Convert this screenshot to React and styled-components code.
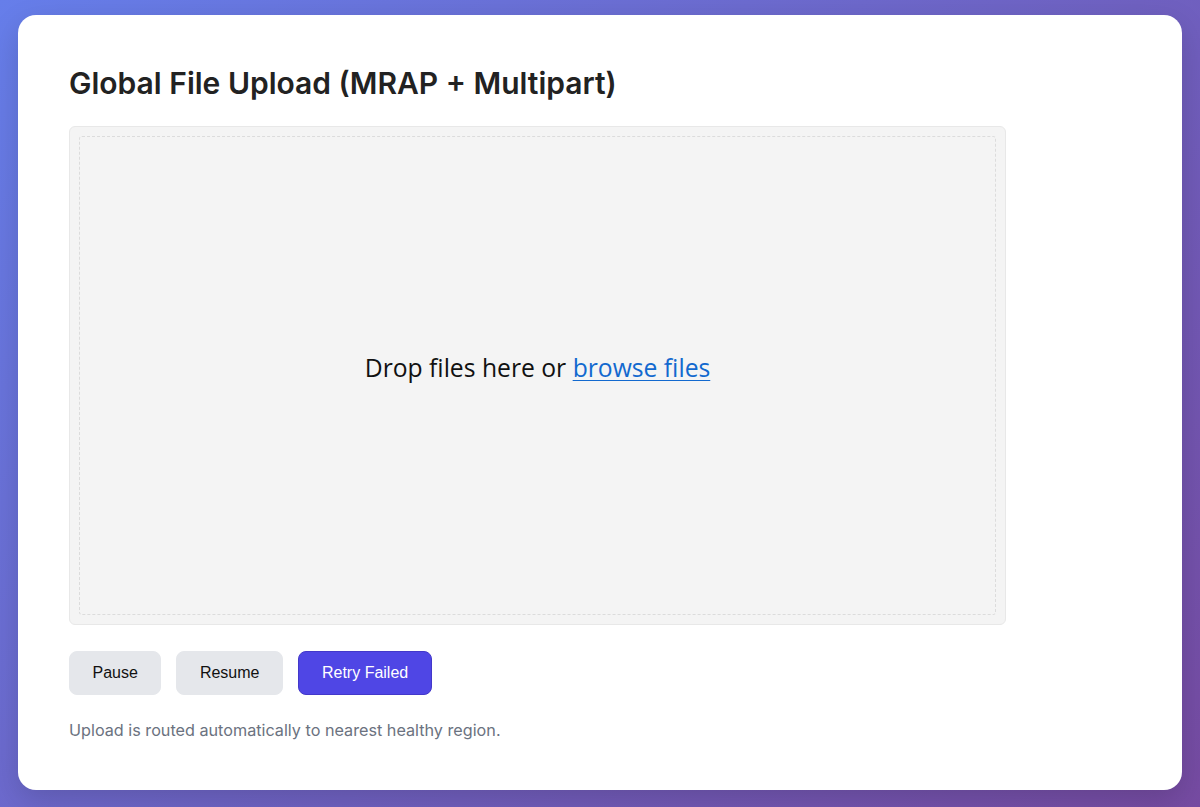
import React from 'react';
import styled, { createGlobalStyle } from 'styled-components';

const GlobalStyle = createGlobalStyle`
  html, body {
    margin: 0;
    padding: 0;
  }
  body {
    font-family: Inter, "Liberation Sans", sans-serif;
    background: linear-gradient(135deg, #667eea 0%, #764ba2 100%);
    min-height: 807px;
  }
`;

const Page = styled.div`
  box-sizing: border-box;
  height: 807px;
  padding: 15px 18px 17px;
  display: flex;
`;

const Card = styled.div`
  flex: 1;
  background: #fff;
  border-radius: 18px;
  padding: 50px 51px 0;
  box-shadow: 0 10px 30px rgba(0, 0, 0, 0.15);
`;

const Title = styled.h2`
  margin: 0 0 25px;
  font-size: 30px;
  font-weight: 600;
  line-height: 36px;
  color: #222;
`;

const DropZone = styled.div`
  box-sizing: border-box;
  width: 937px;
  height: 499px;
  padding: 9px;
  background: #f4f4f4;
  border: 1px solid #e8e8e8;
  border-radius: 6px;
  display: flex;
`;

const DropInner = styled.div`
  flex: 1;
  border: 1px dashed #dcdcdc;
  border-radius: 3px;
  display: flex;
  align-items: center;
  justify-content: center;
  padding-bottom: 16px;
  font-family: "Open Sans", "Noto Sans", sans-serif;
  font-size: 24.7px;
  color: #111;
`;

const Browse = styled.a`
  color: #1269cf;
  text-decoration: underline;
  text-underline-offset: 3px;
  text-decoration-thickness: 1px;
  cursor: pointer;
`;

const Controls = styled.div`
  display: flex;
  gap: 15px;
  margin-top: 26px;
`;

const Button = styled.button`
  height: 44px;
  padding: 0 ${(p) => p.$pad}px;
  border-radius: 8px;
  border: 1px solid ${(p) => (p.$primary ? '#4338ca' : '#e5e7eb')};
  background: ${(p) => (p.$primary ? '#4f46e5' : '#e5e7eb')};
  color: ${(p) => (p.$primary ? '#fff' : '#111')};
  font-family: "Liberation Sans", Arial, sans-serif;
  font-size: 16px;
  cursor: pointer;
`;

const Note = styled.p`
  margin: 25px 0 0;
  font-size: 16.2px;
  color: #6b7280;
`;

export default function App () {
  return (
    <>
      <GlobalStyle />
      <Page>
        <Card>
          <Title>Global File Upload (MRAP + Multipart)</Title>
          <DropZone>
            <DropInner>
              <span>
                Drop files here or{' '}
                <Browse>browse files</Browse>
              </span>
            </DropInner>
          </DropZone>
          <Controls>
            <Button $pad={22.5}>Pause</Button>
            <Button $pad={22.5}>Resume</Button>
            <Button $primary $pad={23}>Retry Failed</Button>
          </Controls>
          <Note>Upload is routed automatically to nearest healthy region.</Note>
        </Card>
      </Page>
    </>
  );
}
